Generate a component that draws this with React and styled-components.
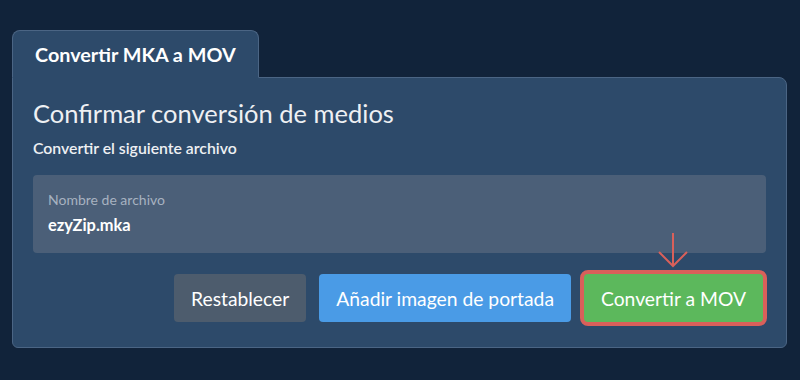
import React from 'react';
import styled, { createGlobalStyle } from 'styled-components';

const GlobalStyle = createGlobalStyle`
  html, body {
    margin: 0;
    padding: 0;
    background: #11233a;
    font-family: Lato, "Open Sans", sans-serif;
  }
`;

const App = () => {
  return (
    <Page>
      <GlobalStyle />
      <Tab>Convertir MKA a MOV</Tab>
      <Card>
        <Title>Confirmar conversión de medios</Title>
        <Subtitle>Convertir el siguiente archivo</Subtitle>
        <FileBox>
          <FileLabel>Nombre de archivo</FileLabel>
          <FileName>ezyZip.mka</FileName>
        </FileBox>
        <Actions>
          <Button variant="gray">Restablecer</Button>
          <Button variant="blue">Añadir imagen de portada</Button>
          <Highlight>
            <Arrow width="30" height="36" viewBox="0 0 30 36">
              <path d="M15 1 V34 M1 20 L15 34 L29 20" fill="none" stroke="#d9605a" strokeWidth="2" />
            </Arrow>
            <Button variant="green">Convertir a MOV</Button>
          </Highlight>
        </Actions>
      </Card>
    </Page>
  );
};

export default App;

const Page = styled.div`
  width: 800px;
  height: 380px;
  box-sizing: border-box;
  padding: 30px 13px 0 12px;
`;

const Tab = styled.div`
  position: relative;
  z-index: 1;
  display: inline-block;
  box-sizing: border-box;
  height: 48px;
  padding: 11px 22px 0 22px;
  margin-bottom: -1px;
  background: #2d4a6a;
  border: 1px solid #4b6584;
  border-bottom: 1px solid #2d4a6a;
  border-radius: 8px 8px 0 0;
  color: #ffffff;
  font-size: 19.8px;
  line-height: 24px;
  font-weight: 700;
`;

const Card = styled.div`
  box-sizing: border-box;
  height: 271px;
  padding: 19px 20px 20px 20px;
  background: #2d4a6a;
  border: 1px solid #4b6584;
  border-radius: 0 8px 6px 6px;
`;

const Title = styled.h1`
  margin: 0;
  font-size: 25.5px;
  line-height: 32px;
  font-weight: 400;
  color: #eef0f3;
`;

const Subtitle = styled.div`
  margin-top: 9px;
  font-size: 15.8px;
  line-height: 20px;
  font-weight: 600;
  color: #eef0f3;
`;

const FileBox = styled.div`
  box-sizing: border-box;
  height: 78px;
  margin-top: 17px;
  padding: 16px 15px;
  background: #4b5f78;
  border-radius: 4px;
`;

const FileLabel = styled.div`
  font-size: 14px;
  line-height: 18px;
  color: #a7b2c0;
`;

const FileName = styled.div`
  margin-top: 5px;
  font-size: 16.4px;
  line-height: 22px;
  font-weight: 700;
  color: #ffffff;
`;

const Actions = styled.div`
  display: flex;
  justify-content: flex-end;
  align-items: center;
  gap: 13px;
  margin-top: 21px;
  padding-right: 3px;
`;

const colors = {
  gray: '#4d5c6d',
  blue: '#4a9be6',
  green: '#5cb85c',
};

const Button = styled.button`
  box-sizing: border-box;
  height: 48px;
  padding: 0 17px;
  border: none;
  border-radius: 4px;
  background: ${({ variant }) => colors[variant]};
  color: #ffffff;
  font-family: Lato, "Open Sans", sans-serif;
  font-size: 19.3px;
  font-weight: 400;
  cursor: pointer;
`;

const Highlight = styled.div`
  position: relative;
  display: flex;
  outline: 4px solid #d9605a;
  border-radius: 4px;

  & > button {
    border-radius: 0;
  }
`;

const Arrow = styled.svg`
  position: absolute;
  left: 50%;
  top: -42px;
  transform: translateX(-50%);
`;
